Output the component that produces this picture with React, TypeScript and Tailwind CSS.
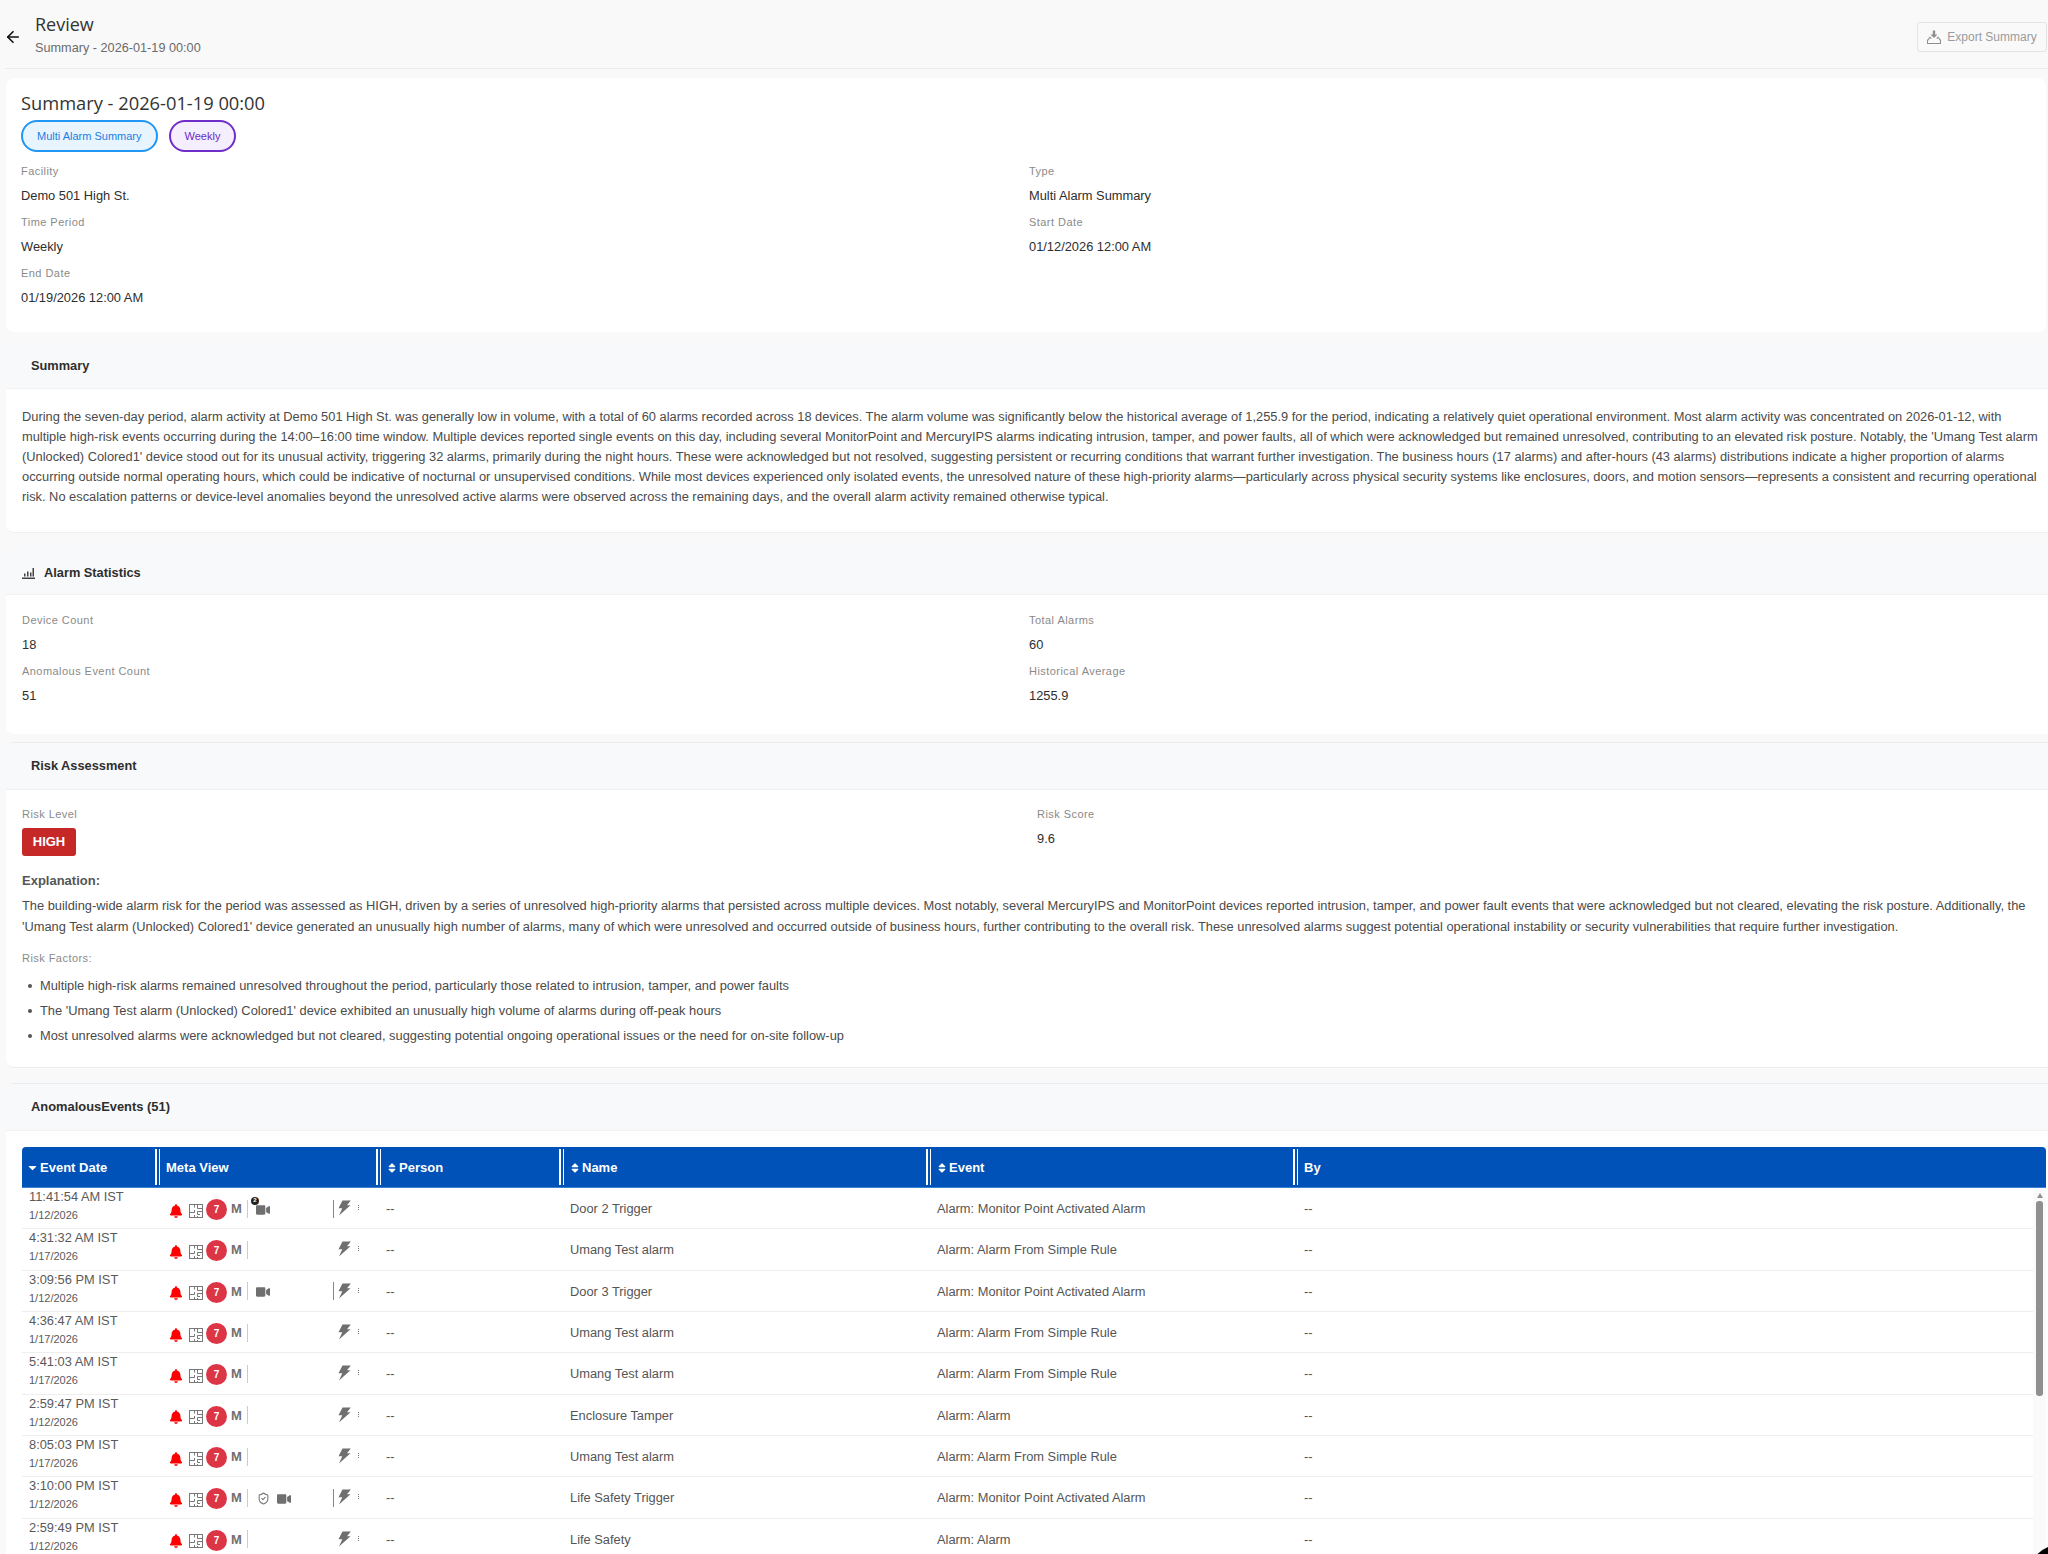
import React from "react";
import { ArrowLeft, ShieldCheck } from "lucide-react";
import { FaBell, FaVideo, FaSort, FaCaretDown } from "react-icons/fa";

const Floor = () => (
  <svg width="14" height="14" viewBox="0 0 14 14" fill="none" stroke="#777" strokeWidth="1">
    <rect x="0.5" y="0.5" width="13" height="13" />
    <path d="M5.5 0.5V3.5M5.5 6V8.5H0.5M5.5 11V13.5M8.5 0.5V4.5H13.5M8.5 7.5H13.5M8.5 7.5V10.5H11M8.5 13.5V12" />
  </svg>
);

const Bolt = () => (
  <svg width="13" height="16" viewBox="0 0 13 16" fill="#6f6f6f">
    <path d="M4.5 0.5H12.8L9 5.2H12.5L1 15.5L4.3 8.2H0.5Z" />
  </svg>
);

const Label = ({ children }: { children: React.ReactNode }) => (
  <div className="h-[25px] pt-[2px] flex items-center text-[11px] tracking-[0.45px] text-[#8a8a8a]">{children}</div>
);
const Value = ({ children }: { children: React.ReactNode }) => (
  <div className="h-[26px] flex items-center text-[12.85px] text-[#2e2e2e]">{children}</div>
);
const Field = ({ label, value }: { label: string; value: string }) => (
  <div>
    <Label>{label}</Label>
    <Value>{value}</Value>
  </div>
);

const rows = [
  ["11:41:54 AM IST", "1/12/2026", "Door 2 Trigger", "Alarm: Monitor Point Activated Alarm", "badge"],
  ["4:31:32 AM IST", "1/17/2026", "Umang Test alarm", "Alarm: Alarm From Simple Rule", ""],
  ["3:09:56 PM IST", "1/12/2026", "Door 3 Trigger", "Alarm: Monitor Point Activated Alarm", "cam"],
  ["4:36:47 AM IST", "1/17/2026", "Umang Test alarm", "Alarm: Alarm From Simple Rule", ""],
  ["5:41:03 AM IST", "1/17/2026", "Umang Test alarm", "Alarm: Alarm From Simple Rule", ""],
  ["2:59:47 PM IST", "1/12/2026", "Enclosure Tamper", "Alarm: Alarm", ""],
  ["8:05:03 PM IST", "1/17/2026", "Umang Test alarm", "Alarm: Alarm From Simple Rule", ""],
  ["3:10:00 PM IST", "1/12/2026", "Life Safety Trigger", "Alarm: Monitor Point Activated Alarm", "shield"],
  ["2:59:49 PM IST", "1/12/2026", "Life Safety", "Alarm: Alarm", ""],
];

const HeadCell = ({ w, sort, caret, children }: { w: string; sort?: boolean; caret?: boolean; children?: React.ReactNode }) => (
  <div className={`${w} shrink-0 h-full relative flex items-center pl-[5px] pt-[1px] gap-[1px] text-[13px] font-bold text-white`}>
    {caret && <FaCaretDown size={13} className="ml-[-1px]" />}
    {sort && <FaSort size={12} />}
    <span className={sort || caret ? "" : "pl-[1px]"}>{children}</span>
  </div>
);

const Sep = () => (
  <div className="shrink-0 h-full w-[5px] flex justify-between py-[2px]">
    <div className="w-[1.5px] bg-white" />
    <div className="w-[1.5px] bg-white" />
  </div>
);

function Row({ r }: { r: string[] }) {
  const kind = r[4];
  return (
    <div className="h-[41.33px] shrink-0 flex items-center border-b border-[#eeeeee] text-[12.85px] text-[#555]">
      <div className="w-[149px] shrink-0 pl-[7px] flex flex-col mt-[-3px]">
        <span className="leading-[18px] text-[12.85px] text-[#5a5a5a]">{r[0]}</span>
        <span className="leading-[19px] text-[11px] text-[#5a5a5a]">{r[1]}</span>
      </div>
      <div className="w-[214px] shrink-0 h-full flex items-center pt-[3px] relative">
        <FaBell size={14} color="#ff0000" className="ml-[-2px] mt-[2px]" />
        <div className="ml-[6px] mt-[2px]"><Floor /></div>
        <div className="ml-[3px] w-[21px] h-[21px] rounded-full bg-[#dc3545] text-white text-[10px] font-bold flex items-center justify-center">7</div>
        <span className="ml-[4px] text-[13px] font-bold text-[#6f6f6f] leading-none mt-[-2px] w-[13px]">M</span>
        <div className="ml-[3px] h-[18px] w-px bg-[#cccccc] mt-[-2px]" />
        <div className="w-[85px] h-full flex items-center relative">
          {(kind === "badge" || kind === "cam") && (
            <span className="ml-[8px] relative">
              <FaVideo size={14} color="#6f6f6f" />
              {kind === "badge" && (
                <span className="absolute left-[-5px] top-[-6px] w-[8px] h-[8px] rounded-full bg-[#222] text-white text-[6px] font-bold flex items-center justify-center">2</span>
              )}
            </span>
          )}
          {kind === "shield" && (
            <>
              <ShieldCheck size={13} color="#777" className="ml-[9px]" />
              <span className="ml-[7px]"><FaVideo size={14} color="#6f6f6f" /></span>
            </>
          )}
        </div>
        <div className={`h-[18px] w-px mt-[-2px] ${kind ? "bg-[#888888]" : "bg-transparent"}`} />
        <div className="ml-[4px] mt-[-3px]"><Bolt /></div>
        <span className="ml-[7px] mt-[-4px] flex flex-col gap-[1px]">
          <i className="block w-[1px] h-[1px] bg-[#777]" />
          <i className="block w-[1px] h-[1px] bg-[#777]" />
          <i className="block w-[1px] h-[1px] bg-[#777]" />
        </span>
      </div>
      <div className="w-[184px] shrink-0 pl-[1px] pt-[1px]">--</div>
      <div className="w-[367px] shrink-0 pl-[1px] pt-[1px]">{r[2]}</div>
      <div className="w-[367px] shrink-0 pl-[1px] pt-[1px]">{r[3]}</div>
      <div className="flex-1 pl-[1px] pt-[1px]">--</div>
    </div>
  );
}

const CardHead = ({ icon, pl, pt, children }: { icon?: React.ReactNode; pl: string; pt: string; children: React.ReactNode }) => (
  <div className={`h-[47px] bg-[#f8f9fa] border-b border-[#f0f1f3] flex items-center ${pl} ${pt} gap-[9px] text-[12.8px] font-bold text-[#2e2e2e]`}>
    {icon}
    {children}
  </div>
);

export default function App() {
  return (
    <div className="relative h-[1554px] w-[2048px] overflow-hidden bg-[#f9f9f9] font-['Liberation_Sans',Arial,sans-serif]">
      <header className="ml-[5px] h-[69px] border-b border-[#ececec] flex items-center pr-[1px]">
        <ArrowLeft size={18} strokeWidth={2.2} color="#111" className="ml-[-1px] mt-[5px]" />
        <div className="ml-[13px] flex flex-col mt-[4px]">
          <span className="font-['Open_Sans',sans-serif] text-[18px] leading-[24px] text-[#333]">Review</span>
          <span className="text-[12.7px] leading-[24px] text-[#6b6b6b]">Summary - 2026-01-19 00:00</span>
        </div>
        <div className="ml-auto mt-[5px] h-[30px] w-[130px] border border-[#e4e4e4] rounded-[3px] flex items-center justify-center gap-[6px] text-[12px] text-[#9b9b9b]">
          <svg width="14" height="14" viewBox="0 0 14 14" fill="#8f8f8f">
            <path d="M5.8 0.5H8.2V4.5H10.5L7 8L3.5 4.5H5.8Z" />
            <path d="M3 6.5L5 8.5H2.5L1 11V13H13V11L11.5 8.5H9L11 6.5L14 10V14H0V10Z" />
          </svg>
          Export Summary
        </div>
      </header>

      <main className="pl-[6px] flex flex-col">
        <section className="mt-[9px] h-[254px] w-[2040px] bg-white rounded-[8px] pl-[15px] pt-[12px]">
          <h1 className="font-['Open_Sans',sans-serif] text-[18.3px] leading-[26px] text-[#333]">Summary - 2026-01-19 00:00</h1>
          <div className="mt-[4px] flex gap-[11px]">
            <span className="h-[32px] px-[14px] rounded-full border-2 border-[#2196f3] bg-[#e8f5ff] text-[#1a7fe0] text-[11px] flex items-center">Multi Alarm Summary</span>
            <span className="h-[32px] px-[14px] rounded-full border-2 border-[#6f2dc9] bg-[#f5eefe] text-[#6a2cc4] text-[11px] flex items-center">Weekly</span>
          </div>
          <div className="mt-[6px] grid grid-cols-[1008px_1fr]">
            <Field label="Facility" value="Demo 501 High St." />
            <Field label="Type" value="Multi Alarm Summary" />
            <Field label="Time Period" value="Weekly" />
            <Field label="Start Date" value="01/12/2026 12:00 AM" />
            <Field label="End Date" value="01/19/2026 12:00 AM" />
          </div>
        </section>

        <section className="mt-[10px] h-[191px] bg-white rounded-l-[8px] border-b border-[#f0f0f0]">
          <CardHead pl="pl-[25px]" pt="pt-[2px]">Summary</CardHead>
          <p className="mt-[18px] pl-[16px] pr-[10px] text-[12.85px] leading-[20px] text-[#4a4a4a]">
            During the seven-day period, alarm activity at Demo 501 High St. was generally low in volume, with a total of 60 alarms recorded across 18 devices. The alarm volume was significantly below the historical average of 1,255.9 for the period, indicating a relatively quiet operational environment. Most alarm activity was concentrated on 2026-01-12, with multiple high-risk events occurring during the 14:00–16:00 time window. Multiple devices reported single events on this day, including several MonitorPoint and MercuryIPS alarms indicating intrusion, tamper, and power faults, all of which were acknowledged but remained unresolved, contributing to an elevated risk posture. Notably, the 'Umang Test alarm (Unlocked) Colored1' device stood out for its unusual activity, triggering 32 alarms, primarily during the night hours. These were acknowledged but not resolved, suggesting persistent or recurring conditions that warrant further investigation. The business hours (17 alarms) and after-hours (43 alarms) distributions indicate a higher proportion of alarms occurring outside normal operating hours, which could be indicative of nocturnal or unsupervised conditions. While most devices experienced only isolated events, the unresolved nature of these high-priority alarms—particularly across physical security systems like enclosures, doors, and motion sensors—represents a consistent and recurring operational risk. No escalation patterns or device-level anomalies beyond the unresolved active alarms were observed across the remaining days, and the overall alarm activity remained otherwise typical.
          </p>
        </section>

        <section className="mt-[15px] h-[186px] bg-white rounded-l-[8px]">
          <CardHead pl="pl-[16px]" pt="pt-[3px]" icon={
            <svg width="13" height="12" viewBox="0 0 13 12" fill="#444">
              <rect x="0" y="10.5" width="13" height="1.5" />
              <rect x="2" y="6.5" width="1.5" height="3" />
              <rect x="5" y="4.5" width="1.5" height="5" />
              <rect x="8" y="5.5" width="1.5" height="4" />
              <rect x="10.5" y="1" width="1.5" height="8.5" />
            </svg>
          }>Alarm Statistics</CardHead>
          <div className="mt-[12px] pl-[16px] grid grid-cols-[1007px_1fr] text-[#2e2e2e]">
            <Field label="Device Count" value="18" />
            <Field label="Total Alarms" value="60" />
            <Field label="Anomalous Event Count" value="51" />
            <Field label="Historical Average" value="1255.9" />
          </div>
        </section>

        <section className="mt-[8px] h-[326px] bg-white rounded-l-[8px] border-t border-b border-[#ececec]">
          <CardHead pl="pl-[25px]" pt="pt-0">Risk Assessment</CardHead>
          <div className="pl-[16px] pr-[16px]">
            <div className="mt-[11px] grid grid-cols-[1015px_1fr]">
              <div>
                <Label>Risk Level</Label>
                <div className="mt-[2px] w-[54px] h-[28px] rounded-[3px] bg-[#c62828] text-white text-[13px] font-bold flex items-center justify-center">HIGH</div>
              </div>
              <Field label="Risk Score" value="9.6" />
            </div>
            <div className="mt-[15px] h-[20px] flex items-center text-[13px] font-bold text-[#555]">Explanation:</div>
            <p className="mt-[4px] text-[12.85px] leading-[21px] text-[#4a4a4a]">
              The building-wide alarm risk for the period was assessed as HIGH, driven by a series of unresolved high-priority alarms that persisted across multiple devices. Most notably, several MercuryIPS and MonitorPoint devices reported intrusion, tamper, and power fault events that were acknowledged but not cleared, elevating the risk posture. Additionally, the 'Umang Test alarm (Unlocked) Colored1' device generated an unusually high number of alarms, many of which were unresolved and occurred outside of business hours, further contributing to the overall risk. These unresolved alarms suggest potential operational instability or security vulnerabilities that require further investigation.
            </p>
            <div className="mt-[11px] h-[20px] flex items-center text-[11px] tracking-[0.45px] text-[#8a8a8a]">Risk Factors:</div>
            <ul className="mt-[5px] text-[12.85px] text-[#4a4a4a]">
              {[
                "Multiple high-risk alarms remained unresolved throughout the period, particularly those related to intrusion, tamper, and power faults",
                "The 'Umang Test alarm (Unlocked) Colored1' device exhibited an unusually high volume of alarms during off-peak hours",
                "Most unresolved alarms were acknowledged but not cleared, suggesting potential ongoing operational issues or the need for on-site follow-up",
              ].map((t) => (
                <li key={t} className="h-[25px] flex items-center">
                  <span className="ml-[6px] mr-[8px] w-[4px] h-[4px] rounded-full bg-[#555]" />
                  {t}
                </li>
              ))}
            </ul>
          </div>
        </section>

        <section className="mt-[15px] bg-white rounded-l-[8px] border-t border-[#ececec]">
          <CardHead pl="pl-[25px]" pt="pt-0"><span className="text-[12.9px]">AnomalousEvents (51)</span></CardHead>
          <div className="mt-[16px] ml-[16px] mr-[2px]">
            <div className="h-[41px] bg-[#0052b8] rounded-t-[4px] border-b border-[#3f7fd0] flex items-center overflow-hidden">
              <HeadCell w="w-[133px]" caret>Event Date</HeadCell>
              <Sep />
              <HeadCell w="w-[216px]">Meta View</HeadCell>
              <Sep />
              <HeadCell w="w-[178px]" sort>Person</HeadCell>
              <Sep />
              <HeadCell w="w-[362px]" sort>Name</HeadCell>
              <Sep />
              <HeadCell w="w-[362px]" sort>Event</HeadCell>
              <Sep />
              <HeadCell w="w-[100px]">By</HeadCell>
            </div>
            <div className="flex">
              <div className="flex-1 flex flex-col">
                {rows.map((r) => (
                  <Row key={r[0]} r={r} />
                ))}
              </div>
              <div className="w-[13px] shrink-0 bg-[#fafafa] flex flex-col items-center pt-[5px]">
                <div className="w-0 h-0 border-l-[3.5px] border-r-[3.5px] border-b-[5px] border-l-transparent border-r-transparent border-b-[#909090]" />
                <div className="mt-[3px] w-[7px] h-[195px] rounded-[3px] bg-[#8f8f8f]" />
              </div>
            </div>
          </div>
        </section>
      </main>
      <div className="absolute left-[2029px] top-[1545px] w-[60px] h-[60px] rounded-full bg-black" />
    </div>
  );
}
